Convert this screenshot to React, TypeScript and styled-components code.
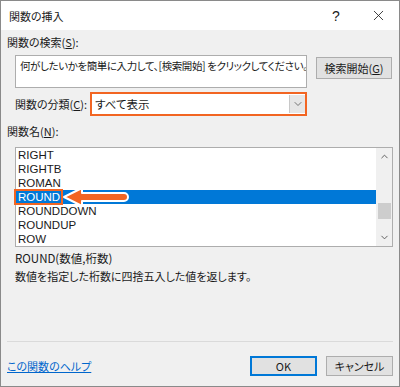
import { createGlobalStyle, styled } from 'styled-components'
import { X, ChevronDown, ChevronUp } from 'lucide-react'

const GlobalStyle = createGlobalStyle`
  html, body {
    margin: 0;
    padding: 0;
    background: #ffffff;
  }
  body {
    font-family: "Noto Sans CJK JP", "Noto Sans", sans-serif;
    font-size: 11px;
    color: #1a1a1a;
    font-feature-settings: "palt";
  }
`

const FUNCTIONS = ['RIGHT', 'RIGHTB', 'ROMAN', 'ROUND', 'ROUNDDOWN', 'ROUNDUP', 'ROW']
const SELECTED = 'ROUND'
const ORANGE = '#f26522'

const App = () => {
  return (
    <>
      <GlobalStyle />
      <Dialog>
        <TitleBar>
          <Title>関数の挿入</Title>
          <HelpGlyph>?</HelpGlyph>
          <CloseButton>
            <X size={17} strokeWidth={1.2} />
          </CloseButton>
        </TitleBar>

        <Body>
          <Label>
            関数の検索(<u>S</u>):
          </Label>
          <SearchRow>
            <SearchBox>何がしたいかを簡単に入力して、[検索開始] をクリックしてください。</SearchBox>
            <Button $width={76}>
              検索開始(<u>G</u>)
            </Button>
          </SearchRow>

          <CategoryRow>
            <CategoryLabel>
              関数の分類(<u>C</u>):
            </CategoryLabel>
            <Select>
              <SelectText>すべて表示</SelectText>
              <DropButton>
                <ChevronDown size={12} strokeWidth={1.6} />
              </DropButton>
            </Select>
          </CategoryRow>

          <NameLabel>
            関数名(<u>N</u>):
          </NameLabel>

          <ListBox>
            <Items>
              {FUNCTIONS.map((name) => (
                <Item key={name} $selected={name === SELECTED}>
                  {name}
                </Item>
              ))}
            </Items>
            <ScrollBar>
              <ChevronUp size={11} strokeWidth={2} />
              <Track>
                <Thumb />
              </Track>
              <ChevronDown size={11} strokeWidth={2} />
            </ScrollBar>
            <Highlight />
            <Arrow width="70" height="22" viewBox="0 0 70 22">
              <path
                d="M2 11 L20 2 L20 7 L62 7 A4 4 0 0 1 62 15 L20 15 L20 20 Z"
                fill={ORANGE}
                stroke="#ffffff"
                strokeWidth="2"
                strokeLinejoin="round"
              />
            </Arrow>
          </ListBox>

          <Syntax>ROUND(数値,桁数)</Syntax>
          <Description>数値を指定した桁数に四捨五入した値を返します。</Description>

          <Spacer />
          <Separator />

          <Footer>
            <HelpLink>この関数のヘルプ</HelpLink>
            <Buttons>
              <Button $width={67} $primary>
                OK
              </Button>
              <Button $width={67}>キャンセル</Button>
            </Buttons>
          </Footer>
        </Body>
      </Dialog>
    </>
  )
}

const Dialog = styled.div`
  width: 400px;
  height: 387px;
  box-sizing: border-box;
  border: 1px solid #8a8a8a;
  background: #f0f0f0;
  display: flex;
  flex-direction: column;
`
const TitleBar = styled.div`
  height: 29px;
  background: #ffffff;
  display: flex;
  align-items: center;
  padding-left: 8px;
`
const Title = styled.div`
  flex: 1;
`
const HelpGlyph = styled.div`
  width: 16px;
  text-align: center;
  font-family: "Liberation Sans", sans-serif;
  font-size: 14px;
  margin-right: 26px;
`
const CloseButton = styled.div`
  width: 17px;
  height: 17px;
  margin-right: 12px;
  display: flex;
  color: #222;
`
const Body = styled.div`
  flex: 1;
  display: flex;
  flex-direction: column;
  padding: 0 6px 10px 6px;
`
const Label = styled.div`
  line-height: 16px;
  margin-top: 4px;
  white-space: nowrap;
`
const SearchRow = styled.div`
  display: flex;
  align-items: flex-start;
  margin-top: 5px;
  padding-left: 8px;
`
const SearchBox = styled.div`
  width: 292px;
  height: 33px;
  box-sizing: border-box;
  border: 1px solid #adadad;
  background: #ffffff;
  padding: 2px 4px;
  font-size: 10.5px;
  line-height: 16px;
  letter-spacing: -0.4px;
  white-space: nowrap;
  overflow: hidden;
`
const Button = styled.div<{ $width: number; $primary?: boolean }>`
  width: ${(p) => p.$width}px;
  height: 22px;
  box-sizing: border-box;
  margin-left: 9px;
  margin-top: 2px;
  display: flex;
  align-items: center;
  justify-content: center;
  white-space: nowrap;
  background: #e1e1e1;
  border: 1px solid ${(p) => (p.$primary ? '#0078d7' : '#adadad')};
  box-shadow: ${(p) => (p.$primary ? 'inset 0 0 0 1px #0078d7' : 'none')};
`
const CategoryRow = styled.div`
  display: flex;
  align-items: center;
  margin-top: 4px;
  padding-left: 8px;
`
const CategoryLabel = styled.div`
  width: 75px;
  white-space: nowrap;
`
const Select = styled.div`
  width: 217px;
  height: 24px;
  box-sizing: border-box;
  border: 2px solid ${ORANGE};
  background: #ffffff;
  display: flex;
  align-items: stretch;
`
const SelectText = styled.div`
  flex: 1;
  display: flex;
  align-items: center;
  padding-left: 3px;
  font-size: 11.5px;
`
const DropButton = styled.div`
  width: 15px;
  margin: 1px 0;
  border-left: 1px solid #c8c8c8;
  background: #e6e6e6;
  display: flex;
  align-items: center;
  justify-content: center;
  color: #555;
`
const NameLabel = styled.div`
  line-height: 16px;
  margin-top: 7px;
  white-space: nowrap;
`
const ListBox = styled.div`
  position: relative;
  margin: 8px 0 0 8px;
  width: 378px;
  height: 100px;
  box-sizing: border-box;
  border: 1px solid #adadad;
  background: #ffffff;
  display: flex;
`
const Items = styled.div`
  flex: 1;
  display: flex;
  flex-direction: column;
  font-family: "Liberation Sans", "Noto Sans", sans-serif;
  font-size: 11.5px;
`
const Item = styled.div<{ $selected?: boolean }>`
  height: 14px;
  line-height: 14px;
  padding-left: 2px;
  background: ${(p) => (p.$selected ? '#0078d7' : 'transparent')};
  color: ${(p) => (p.$selected ? '#ffffff' : '#1a1a1a')};
`
const ScrollBar = styled.div`
  width: 16px;
  background: #f0f0f0;
  display: flex;
  flex-direction: column;
  align-items: center;
  padding: 3px 0;
  box-sizing: border-box;
  color: #555;
`
const Track = styled.div`
  flex: 1;
  width: 100%;
  position: relative;
`
const Thumb = styled.div`
  position: absolute;
  left: 2px;
  right: 1px;
  top: 41px;
  height: 16px;
  background: #cdcdcd;
`
const Highlight = styled.div`
  position: absolute;
  left: -2px;
  top: 41px;
  width: 49px;
  height: 16px;
  box-sizing: border-box;
  border: 2px solid ${ORANGE};
`
const Arrow = styled.svg`
  position: absolute;
  left: 46px;
  top: 38px;
`
const Syntax = styled.div`
  margin-top: 3px;
  padding-left: 8px;
  line-height: 16px;
  font-size: 11.5px;
`
const Description = styled.div`
  margin-top: 2px;
  padding-left: 8px;
  line-height: 16px;
`
const Spacer = styled.div`
  flex: 1;
`
const Separator = styled.div`
  height: 1px;
  background: #dadada;
`
const Footer = styled.div`
  margin-top: 14px;
  display: flex;
  align-items: center;
  justify-content: space-between;
`
const HelpLink = styled.a`
  color: #0066cc;
  text-decoration: underline;
  cursor: pointer;
`
const Buttons = styled.div`
  display: flex;
  align-items: flex-start;
  & > div {
    margin-top: 0;
    height: 20px;
  }
`

export default App
